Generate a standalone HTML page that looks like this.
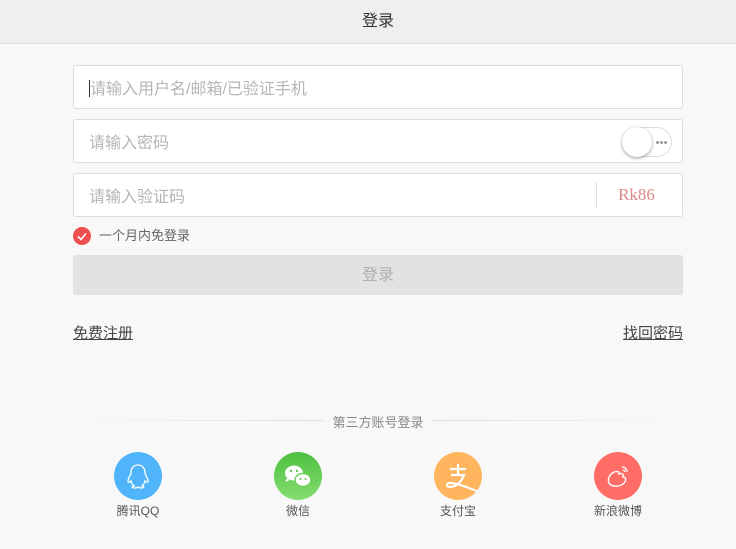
<!DOCTYPE html>
<html><head><meta charset="utf-8"><style>
*{box-sizing:border-box;margin:0;padding:0}
body{width:736px;height:549px;background:#f8f8f8;font-family:"Liberation Sans","Noto Sans CJK SC",sans-serif;position:relative;overflow:hidden}
.hd{height:44px;background:#efefef;border-bottom:1px solid #ddd;line-height:44px;font-size:16px;color:#333;position:relative}
.hd span{position:absolute;left:0;width:756px;text-align:center}
.in{position:absolute;left:73px;width:610px;height:44px;background:#fff;border:1px solid #dcdcdc;border-radius:3px;font-size:16px;color:#b5b5b5;line-height:44px;padding-left:15px}
.in .t{position:relative;top:2px}
.cur{display:inline-block;width:1px;height:17px;background:#333;vertical-align:-3px}
.tg{position:absolute;right:10px;top:7px;width:50px;height:30px;border:1px solid #ddd;border-radius:15px;background:#fff}
.tg .k{position:absolute;left:-1px;top:-1px;width:30px;height:30px;border-radius:50%;background:#fff;box-shadow:0 1px 3px rgba(0,0,0,.4)}
.tg i{position:absolute;top:13px;width:3px;height:3px;border-radius:50%;background:#999}
.cap{position:absolute;right:0;top:8px;height:26px;width:86px;border-left:1px solid #ddd;color:#d88;font-family:"Liberation Serif",serif;font-size:17px;line-height:26px;text-align:center;padding-right:6px}
.chk{position:absolute;left:73px;top:227px;width:18px;height:18px;border-radius:50%;background:#ee4f4f}
.rem{position:absolute;left:99px;top:227px;font-size:13px;color:#666;line-height:18px}
.btn{position:absolute;left:73px;top:255px;width:610px;height:40px;background:#e2e2e2;border-radius:3px;text-align:center;line-height:42px;font-size:16px;color:#b0b0b0}
.lk{position:absolute;top:322px;font-size:15px;color:#444;text-decoration:underline}
.sep{position:absolute;top:420px;height:1px;background:linear-gradient(to right,rgba(220,220,220,0),#ddd)}
.tt{position:absolute;top:412px;left:0;width:756px;text-align:center;font-size:13px;color:#888}
.ic{position:absolute;top:452px;width:48px;height:48px;border-radius:50%}
.lb{position:absolute;top:502px;width:100px;text-align:center;font-size:12px;color:#555}
</style></head><body>
<div class="hd"><span>登录</span></div>
<div class="in" style="top:65px"><span class="t"><span class="cur"></span>请输入用户名/邮箱/已验证手机</span></div>
<div class="in" style="top:119px"><span class="t">请输入密码</span><div class="tg"><div class="k"></div><i style="left:33px"></i><i style="left:37px"></i><i style="left:41px"></i></div></div>
<div class="in" style="top:173px"><span class="t">请输入验证码</span><div class="cap">Rk86</div></div>
<div class="chk"><svg width="18" height="18"><path d="M5 9.5l3 3 5-6" stroke="#fff" stroke-width="1.6" fill="none"/></svg></div>
<div class="rem">一个月内免登录</div>
<div class="btn">登录</div>
<div class="lk" style="left:73px">免费注册</div>
<div class="lk" style="left:623px">找回密码</div>
<div class="sep" style="left:73px;width:250px"></div>
<div class="sep" style="left:432px;width:250px;transform:scaleX(-1)"></div>
<div class="tt">第三方账号登录</div>
<div class="ic" style="left:114px;background:#4fb4f9"><svg width="48" height="48"><path d="M24 13c-5 0-7 4-7 8 0 2-3 5-3 8 0 2 2 1 3 0 0 2 2 4 3 5-2 0-3 2 1 2 2 0 3-1 3-1s1 1 3 1c4 0 3-2 1-2 1-1 3-3 3-5 1 1 3 2 3 0 0-3-3-6-3-8 0-4-2-8-7-8z" stroke="#fff" stroke-width="1.3" fill="none"/></svg></div>
<div class="ic" style="left:274px;background:linear-gradient(#4ec040,#85dd70)"><svg width="48" height="48"><ellipse cx="20" cy="21" rx="9" ry="7.5" fill="#fff"/><path d="M13 26l-2 4 5-2z" fill="#fff"/><ellipse cx="29" cy="28" rx="8" ry="6.5" fill="#fff" stroke="#6cd05a" stroke-width="1.5"/><circle cx="17" cy="19" r="1.2" fill="#5cc84a"/><circle cx="23" cy="19" r="1.2" fill="#5cc84a"/><circle cx="26.5" cy="27" r="1" fill="#5cc84a"/><circle cx="31.5" cy="27" r="1" fill="#5cc84a"/></svg></div>
<div class="ic" style="left:434px;background:#ffb55e;overflow:hidden"><svg width="48" height="48"><path d="M16 17h16M24 12v10M17 23h13c-3 8-9 12-14 12-4 0-4-4 0-4 6 0 14 3 32 10" stroke="#fff" stroke-width="2.2" fill="none"/></svg></div>
<div class="ic" style="left:594px;background:#ff6d66"><svg width="48" height="48"><path d="M20 20c-4 2-7 7-5 11 2 4 10 4 14 1 4-3 3-7 0-7 1-3-1-4-4-3 1-2-1-3-5-2z" stroke="#fff" stroke-width="1.4" fill="none"/><path d="M28 15c3 0 5 2 5 5M29 18c1 0 2 1 2 2" stroke="#fff" stroke-width="1.3" fill="none"/></svg></div>
<div class="lb" style="left:88px">腾讯QQ</div>
<div class="lb" style="left:248px">微信</div>
<div class="lb" style="left:408px">支付宝</div>
<div class="lb" style="left:568px">新浪微博</div>
</body></html>
